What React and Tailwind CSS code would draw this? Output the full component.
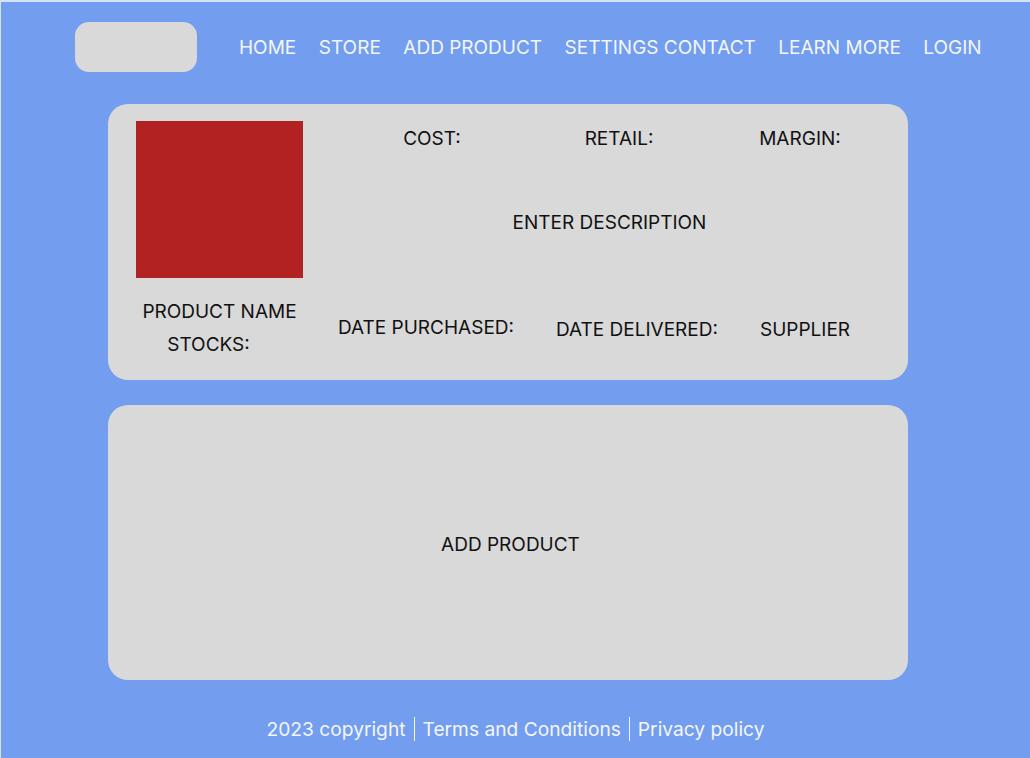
import React from "react";

const navLinks = ["HOME", "STORE", "ADD PRODUCT", "SETTINGS CONTACT", "LEARN MORE", "LOGIN"];

const App = () => {
  return (
    <div
      className="w-[1030px] h-[758px] bg-[#739DEE] border-t-2 border-l border-[#d6e2fb] overflow-hidden text-[#111]"
      style={{ fontFamily: "Inter, 'Noto Sans', sans-serif" }}
    >
      {/* NAV */}
      <div className="flex items-center pt-[20px] pl-[74px]">
        <div className="w-[122px] h-[50px] rounded-[14px] bg-[#D9D9D9]" />
        <nav className="flex items-center gap-[22.5px] ml-[42px] mt-[2px]">
          {navLinks.map((link) => (
            <a key={link} className="text-[19px] leading-[24px] text-[#f3f6fd]">
              {link}
            </a>
          ))}
        </nav>
      </div>

      {/* PRODUCT CARD */}
      <div className="ml-[107px] mt-[32px] w-[800px] h-[276px] rounded-[20px] bg-[#D9D9D9] flex">
        <div className="ml-[28px] pt-[17px] w-[167px] flex flex-col items-center">
          <div className="w-[167px] h-[157px] bg-[#B22222]" />
          <div className="mt-[17px] text-[19px] leading-[33px] text-center whitespace-nowrap">
            <p>PRODUCT NAME</p>
            <p className="pr-[22px]">STOCKS:</p>
          </div>
        </div>

        <div className="flex-1 flex flex-col pt-[24px] text-[19px] leading-[22px] whitespace-nowrap">
          <div className="flex ml-[17px]">
            <span className="w-[224px] text-center">COST:</span>
            <span className="w-[150px] text-center">RETAIL:</span>
            <span className="w-[212px] text-center">MARGIN:</span>
          </div>
          <p className="mt-[62px] text-center pl-[8px]">ENTER DESCRIPTION</p>
          <div className="flex mt-[83px] ml-[35px]">
            <span className="w-[218px]">DATE PURCHASED:</span>
            <span className="w-[204px] pt-[2px]">DATE DELIVERED:</span>
            <span className="pt-[2px]">SUPPLIER</span>
          </div>
        </div>
      </div>

      {/* ADD PRODUCT */}
      <div className="ml-[107px] mt-[25px] w-[800px] h-[275px] rounded-[20px] bg-[#D9D9D9] flex items-center justify-center">
        <button className="text-[19px] leading-[22px] pl-[5px] pt-[4px]">ADD PRODUCT</button>
      </div>

      {/* FOOTER */}
      <footer className="mt-[37px] flex justify-center items-center text-[19.2px] leading-[24px] text-[#f3f6fd]">
        <span>2023 copyright</span>
        <span className="mx-[8px] h-[24px] border-l border-[#f3f6fd]" />
        <span>Terms and Conditions</span>
        <span className="mx-[8px] h-[24px] border-l border-[#f3f6fd]" />
        <span>Privacy policy</span>
      </footer>
    </div>
  );
};

export default App;
